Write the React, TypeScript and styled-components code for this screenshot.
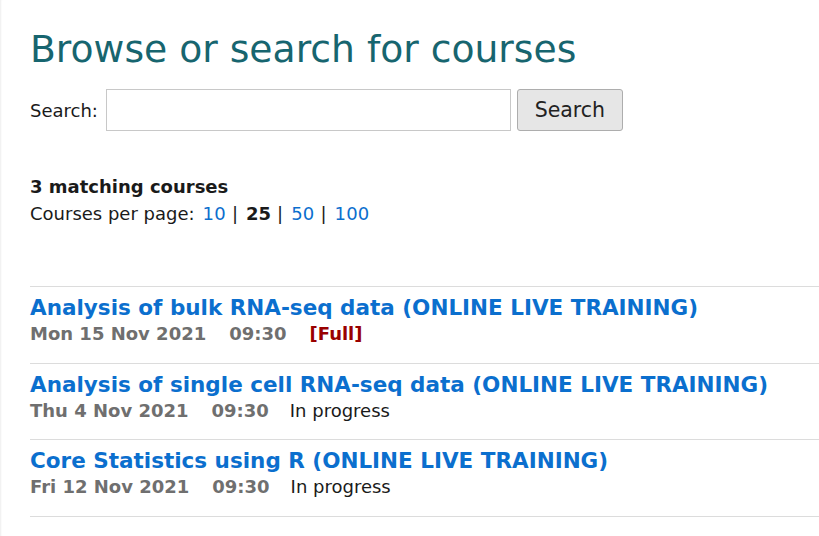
import styled, { createGlobalStyle } from 'styled-components';

type Course = {
  title: string;
  date: string;
  time: string;
  status: string;
  full?: boolean;
};

const courses: Course[] = [
  {
    title: 'Analysis of bulk RNA-seq data (ONLINE LIVE TRAINING)',
    date: 'Mon 15 Nov 2021',
    time: '09:30',
    status: '[Full]',
    full: true,
  },
  {
    title: 'Analysis of single cell RNA-seq data (ONLINE LIVE TRAINING)',
    date: 'Thu 4 Nov 2021',
    time: '09:30',
    status: 'In progress',
  },
  {
    title: 'Core Statistics using R (ONLINE LIVE TRAINING)',
    date: 'Fri 12 Nov 2021',
    time: '09:30',
    status: 'In progress',
  },
];

const perPage = [10, 25, 50, 100];

const App = () => (
  <>
    <GlobalStyle />
    <Page>
      <Heading>Browse or search for courses</Heading>
      <SearchForm onSubmit={(e) => e.preventDefault()}>
        <Label htmlFor="search">Search:</Label>
        <Input id="search" type="text" />
        <Button type="submit">Search</Button>
      </SearchForm>
      <Summary>
        <Count>3 matching courses</Count>
        <PerPage>
          <PerPageLabel>Courses per page:</PerPageLabel>
          {perPage.map((n, i) => (
            <span key={n}>
              {i > 0 && <Separator>|</Separator>}
              {n === 25 ? <Current>{n}</Current> : <PageLink href="#">{n}</PageLink>}
            </span>
          ))}
        </PerPage>
      </Summary>
      <List>
        {courses.map((c) => (
          <Row key={c.title}>
            <Title href="#">{c.title}</Title>
            <Meta>
              <When>{c.date}</When>
              <When>{c.time}</When>
              <Status $full={c.full}>{c.status}</Status>
            </Meta>
          </Row>
        ))}
      </List>
    </Page>
  </>
);

export default App;

const GlobalStyle = createGlobalStyle`
  body {
    margin: 0;
    background: #fff;
    font-family: "DejaVu Sans", Verdana, sans-serif;
    font-size: 18px;
    color: #1a1a1a;
  }
`;

const Page = styled.div`
  padding: 27px 0 0 30px;
  box-shadow: inset 2px 0 2px -1px #eee;
  min-height: 536px;
  box-sizing: border-box;
`;

const Heading = styled.h1`
  margin: 0;
  font-size: 37.7px;
  font-weight: normal;
  line-height: 44px;
  color: #17656f;
`;

const SearchForm = styled.form`
  display: flex;
  align-items: center;
  margin-top: 18px;
`;

const Label = styled.label`
  margin-right: 8px;
`;

const Input = styled.input`
  width: 405px;
  height: 42px;
  box-sizing: border-box;
  border: 1px solid #c8c8c8;
  padding: 0 6px;
  font: inherit;
  margin: 0;
`;

const Button = styled.button`
  margin: 0 0 0 6px;
  height: 42px;
  width: 106px;
  box-sizing: border-box;
  background: #e6e6e6;
  border: 1px solid #adadad;
  border-radius: 3px;
  font-family: inherit;
  font-size: 20.5px;
  color: #222;
`;

const Summary = styled.div`
  margin-top: 42px;
  line-height: 27px;
`;

const Count = styled.div`
  font-weight: bold;
`;

const PerPage = styled.div``;

const PerPageLabel = styled.span`
  margin-right: 8px;
`;

const Separator = styled.span`
  display: inline-block;
  margin: 0 8px 0 6px;
`;

const PageLink = styled.a`
  color: #0b6fce;
  text-decoration: none;
  letter-spacing: 0.2px;
`;

const Current = styled.b``;

const List = styled.div`
  margin-top: 59px;
  border-bottom: 1px solid #dcdcdc;
`;

const Row = styled.div`
  border-top: 1px solid #dcdcdc;
  padding: 8px 0 16px;
  display: flex;
  flex-direction: column;

  &:nth-child(2) {
    padding-bottom: 15px;
  }
`;

const Title = styled.a`
  font-size: 21.5px;
  font-weight: bold;
  line-height: 26px;
  color: #0b6fce;
  text-decoration: none;
`;

const Meta = styled.div`
  display: flex;
  gap: 23px;
  line-height: 26px;
`;

const When = styled.span`
  font-weight: bold;
  color: #6f6f6f;
`;

const Status = styled.span<{ $full?: boolean }>`
  font-weight: ${(p) => (p.$full ? 'bold' : 'normal')};
  color: ${(p) => (p.$full ? '#990000' : '#1a1a1a')};
  margin-left: ${(p) => (p.$full ? '0' : '-2px')};
`;
